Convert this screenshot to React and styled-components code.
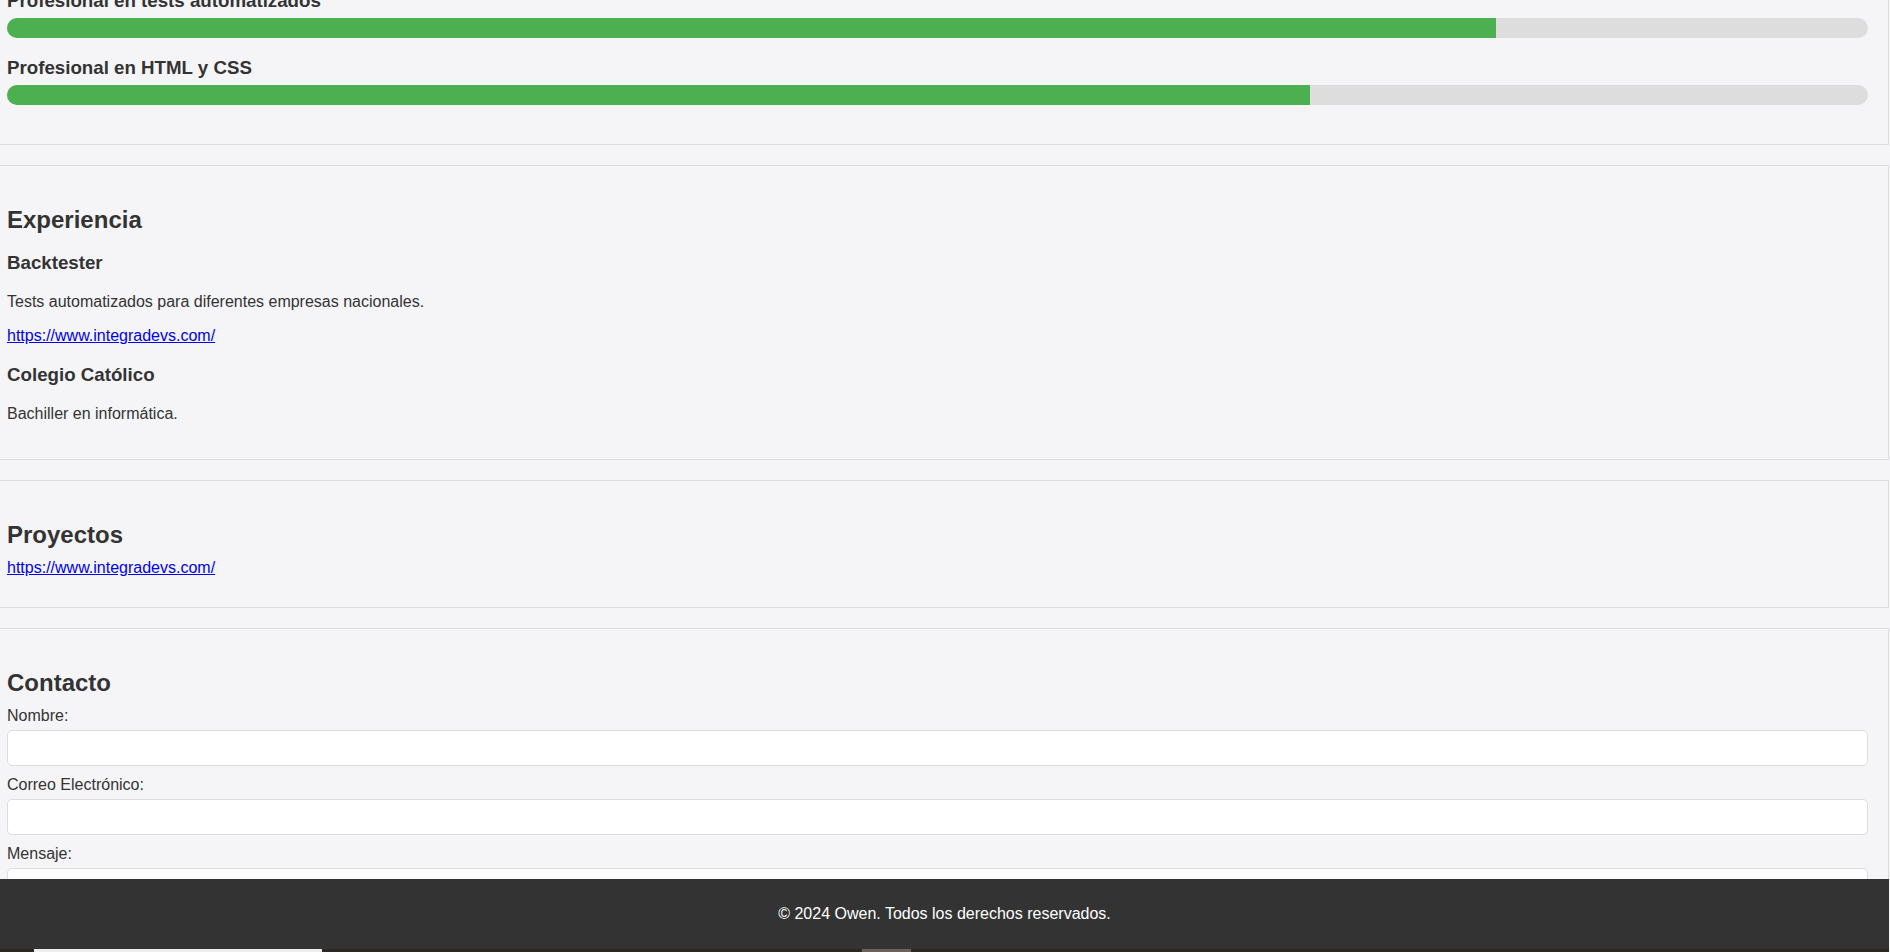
import React from "react";
import styled, { createGlobalStyle } from "styled-components";

const GlobalStyle = createGlobalStyle`
  html, body {
    margin: 0;
    padding: 0;
    background-color: #f5f5f7;
    color: #333;
    font-family: "Liberation Sans", Arial, sans-serif;
    overflow: hidden;
  }
`;

const Main = styled.main`
  display: flex;
  flex-direction: column;
  gap: 20px;
  margin-top: -98px;
  margin-right: 1px;
`;

const Section = styled.section`
  border: 1px solid #ddd;
  border-left: none;
  padding: 20px 20px 20px 7px;
`;

const SectionTitle = styled.h2`
  font-size: 24px;
  margin: 19.92px 0 10px;
`;

const SkillName = styled.h3`
  font-size: 18.72px;
  margin: 18.72px 0 6px;
`;

const Track = styled.div`
  height: 20px;
  border-radius: 10px;
  background-color: #ddd;
  overflow: hidden;
  margin-bottom: 19px;
`;

const Fill = styled.div`
  height: 100%;
  background-color: #4caf50;
`;

const JobTitle = styled.h3`
  font-size: 18.72px;
  margin: 18.72px 0;
`;

const Text = styled.p`
  font-size: 16px;
  margin: 16px 0;
`;

const Link = styled.a`
  display: block;
  width: fit-content;
  font-size: 16px;
  color: #0000ee;
  text-decoration: underline;
  margin-bottom: ${(p) => p.$after}px;
`;

const Form = styled.form`
  display: flex;
  flex-direction: column;
`;

const Label = styled.label`
  display: block;
  font-size: 16px;
  margin-bottom: 5px;
`;

const Input = styled.input`
  box-sizing: border-box;
  width: 100%;
  padding: 8px;
  font-size: 16px;
  font-family: inherit;
  border: 1px solid #ddd;
  border-radius: 5px;
  background: #fff;
  margin-bottom: 10px;
`;

const TextArea = styled.textarea`
  box-sizing: border-box;
  width: 100%;
  height: 100px;
  padding: 8px;
  font-size: 16px;
  font-family: inherit;
  border: 1px solid #ddd;
  border-radius: 5px;
  background: #fff;
  margin-bottom: 10px;
`;

const SendButton = styled.button`
  align-self: flex-start;
  padding: 10px 20px;
  border: none;
  border-radius: 5px;
  background-color: #4caf50;
  color: #fff;
  font-size: 16px;
`;

const Dock = styled.div`
  position: fixed;
  left: 0;
  right: 1px;
  bottom: 0;
`;

const Footer = styled.footer`
  background-color: #333;
  color: #fff;
  text-align: center;
  padding: 10px 0;
`;

const Copy = styled.p`
  margin: 16px 0;
  font-size: 16px;
`;

const Taskbar = styled.div`
  display: flex;
  height: 3px;
  background-color: #2e2822;
`;

const TaskItem = styled.div`
  width: ${(p) => p.$w}px;
  margin-left: ${(p) => p.$left}px;
  background-color: ${(p) => p.$color};
`;

const skills = [
  { name: "Profesional en tests automatizados", level: 80 },
  { name: "Profesional en HTML y CSS", level: 70 },
];

export default function App() {
  return (
    <>
      <GlobalStyle />
      <Main>
        <Section>
          <SectionTitle>Habilidades</SectionTitle>
          {skills.map((s) => (
            <div key={s.name}>
              <SkillName>{s.name}</SkillName>
              <Track>
                <Fill style={{ width: `${s.level}%` }} />
              </Track>
            </div>
          ))}
        </Section>

        <Section>
          <SectionTitle>Experiencia</SectionTitle>
          <JobTitle>Backtester</JobTitle>
          <Text>Tests automatizados para diferentes empresas nacionales.</Text>
          <Link href="https://www.integradevs.com/" $after={19}>
            https://www.integradevs.com/
          </Link>
          <JobTitle>Colegio Católico</JobTitle>
          <Text>Bachiller en informática.</Text>
        </Section>

        <Section>
          <SectionTitle>Proyectos</SectionTitle>
          <Link href="https://www.integradevs.com/" $after={10}>
            https://www.integradevs.com/
          </Link>
        </Section>

        <Section>
          <SectionTitle>Contacto</SectionTitle>
          <Form>
            <Label htmlFor="nombre">Nombre:</Label>
            <Input id="nombre" type="text" />
            <Label htmlFor="correo">Correo Electrónico:</Label>
            <Input id="correo" type="email" />
            <Label htmlFor="mensaje">Mensaje:</Label>
            <TextArea id="mensaje" />
            <SendButton type="submit">Enviar</SendButton>
          </Form>
        </Section>
      </Main>

      <Dock>
        <Footer>
          <Copy>© 2024 Owen. Todos los derechos reservados.</Copy>
        </Footer>
        <Taskbar>
          <TaskItem $left={34} $w={288} $color="#eeeeee" />
          <TaskItem $left={540} $w={49} $color="#6a625b" />
        </Taskbar>
      </Dock>
    </>
  );
}
